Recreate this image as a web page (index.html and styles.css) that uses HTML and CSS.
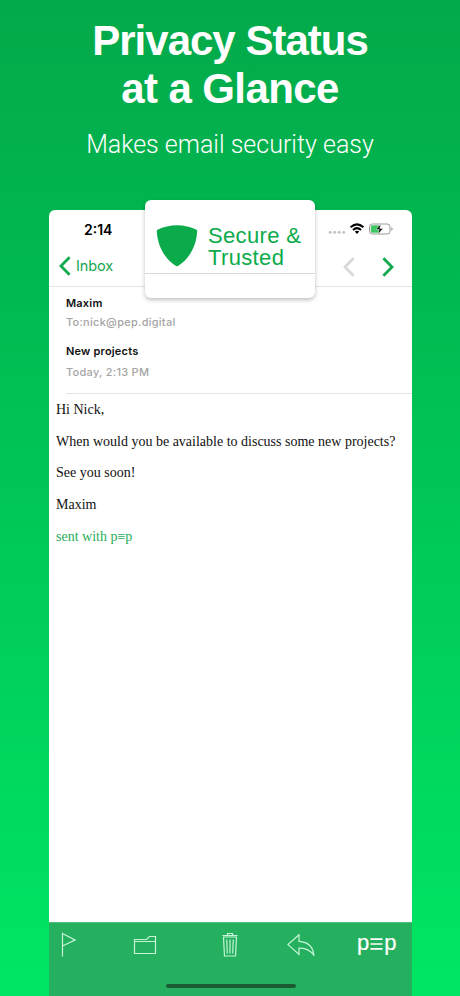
FILE: index.html
```html
<!DOCTYPE html>
<html lang="en">
<head>
    <meta charset="UTF-8">
    <meta name="viewport" content="width=device-width, initial-scale=1.0">
    <title>Privacy Status at a Glance</title>
    <link rel="stylesheet" href="styles.css">
</head>
<body>
    <header class="intro">
        <h1>Privacy Status<br><span class="second-line">at a Glance</span></h1>
        <p>Makes email security easy</p>
    </header>

    <main class="phone">
        <div class="status-bar">
            <span class="time">2:14</span>
            <svg class="status-icons" width="66" height="16" viewBox="0 0 66 16">
                <g fill="#c4c4c4">
                    <circle cx="2.2" cy="11.2" r="1.5"/>
                    <circle cx="6.7" cy="11.2" r="1.5"/>
                    <circle cx="11.2" cy="11.2" r="1.5"/>
                    <circle cx="15.7" cy="11.2" r="1.5"/>
                </g>
                <g fill="none" stroke="#000" stroke-width="2">
                    <path d="M22.6 6.2Q29 .5 35.4 6.2"/>
                    <path d="M25 8.9Q29 5.3 33 8.9"/>
                </g>
                <path d="M26.8 10.6Q29 8.9 31.2 10.6L29 13z"/>
                <rect x="41.500" y="3" width="20.500" height="10" rx="2.8" fill="#fff" stroke="#999" stroke-width="1"/>
                <rect x="42.800" y="4.300" width="9" height="7.400" rx="1.5" fill="#3fc765"/>
                <path d="M63.300 6.200v3.500q1.400-.5 1.400-1.750T63.300 6.200z" fill="#999"/>
                <path d="M53 2.8l-5 5.800h3.200l-1.200 4.800 5-6h-3.200z" stroke="#fff" stroke-width=".5"/>
            </svg>
        </div>

        <nav class="nav-bar">
            <a class="back" href="#">
                <svg width="12" height="20" viewBox="0 0 12 20"><path d="M10.6 1.3L2 10l8.6 8.7"/></svg>
                <span>Inbox</span>
            </a>
            <div class="arrows">
                <svg class="previous" width="12" height="20" viewBox="0 0 12 20"><path d="M10.6 1.3L2 10l8.6 8.7"/></svg>
                <svg class="next" width="12" height="20" viewBox="0 0 12 20"><path d="M1.4 1.3L10 10l-8.6 8.7"/></svg>
            </div>
        </nav>

        <section class="mail-head">
            <div class="sender">Maxim</div>
            <div class="recipient">To:nick@pep.digital</div>
            <div class="subject">New projects</div>
            <div class="date">Today, 2:13 PM</div>
        </section>

        <article class="mail-body">
            <p>Hi Nick,</p>
            <p>When would you be available to discuss some new projects?</p>
            <p>See you soon!</p>
            <p>Maxim</p>
            <p class="signature">sent with p≡p</p>
        </article>

        <footer class="toolbar">
            <div class="actions">
                <svg class="flag" width="15" height="25" viewBox="0 0 15 25"><path d="M1.5 24.5V1.5L14 8 1.5 14"/></svg>
                <svg class="folder" width="24" height="20" viewBox="0 0 24 20"><path d="M1.5 18.5v-14h12l3-3h6v17zM1.5 6.500h21"/></svg>
                <svg class="trash" width="16" height="25" viewBox="0 0 16 25"><path d="M.5 3.5h15M5.5 3.5v-2h5v2M1.500 5h13l-1 19h-11zM4.700 7.500l.6 14M8 7.500v14M11.300 7.500l-.6 14"/></svg>
                <svg class="reply" width="28" height="22" viewBox="0 0 28 22"><path d="M12 .8L1 10.6 12 20.5v-6.400q9-.6 14.800 7Q26 8.500 12 7.300z"/></svg>
                <span class="pep">p<svg width="13" height="12" viewBox="0 0 13 12"><path d="M.5 1.200h12M.5 6h12M.5 10.800h12"/></svg>p</span>
            </div>
            <div class="home-indicator"></div>
        </footer>

        <!-- privacy status callout -->
        <div class="badge">
            <div class="badge-content">
                <svg class="shield" width="42" height="42" viewBox="0 0 42 42"><path d="M21 .3Q31.500.3 40.500 4.800Q41.400 5.300 41.200 7C40 22 33 34 22 41Q21 41.600 20 41C9 34 2 22 .8 7Q.6 5.300 1.500 4.800Q10.500.3 21 .3z"/></svg>
                <span>Secure &amp;<br>Trusted</span>
            </div>
        </div>
    </main>
</body>
</html>
```

FILE: styles.css
```css
* {
    box-sizing: border-box;
}
body {
    margin: 0;
    height: 996px;
    overflow: hidden;
    display: flex;
    flex-direction: column;
    background: linear-gradient(#04a94a, #00b750 25%, #00e664);
    font-family: Inter, "Liberation Sans", sans-serif;
}
.intro {
    height: 210px;
    padding-top: 17px;
    color: white;
    text-align: center;
    font-family: "Liberation Sans", Arial, sans-serif;
}
h1 {
    margin: 0;
    font-size: 42px;
    line-height: 48px;
    letter-spacing: -1px;
}
.second-line {
    letter-spacing: -0.6px;
}
.intro p {
    margin: 17px 0 0;
    font-family: Roboto, sans-serif;
    font-weight: 300;
    font-size: 25px;
    line-height: 30px;
}
.phone {
    position: relative;
    width: 363px;
    height: 786px;
    margin-left: 49px;
    display: flex;
    flex-direction: column;
    background: white;
    border-radius: 6px 6px 0 0;
}
.status-bar {
    height: 38px;
    padding: 0 18px 0 35px;
    display: flex;
    justify-content: space-between;
    align-items: center;
}
.time {
    font-size: 14px;
    font-weight: 600;
}
.nav-bar {
    height: 39px;
    padding: 0 18px 3px 10px;
    display: flex;
    justify-content: space-between;
    align-items: center;
    border-bottom: 1px solid #e4e4e4;
}
.nav-bar svg {
    fill: none;
    stroke: #12a84d;
    stroke-width: 2.8;
}
.back {
    display: flex;
    align-items: center;
    gap: 5px;
    color: #12a84d;
    font-size: 14.5px;
    letter-spacing: -0.1px;
    text-decoration: none;
}
.arrows {
    display: flex;
    gap: 27px;
    padding-top: 2px;
}
.nav-bar .previous {
    stroke: #d9d9d9;
}
.mail-head {
    height: 107px;
    margin-left: 17px;
    padding-top: 8px;
    border-bottom: 1px solid #e4e4e4;
    font-size: 11px;
    line-height: 16px;
    letter-spacing: 0.27px;
    color: #a5a5a5;
    font-weight: 500;
}
.sender, .subject {
    color: #111;
    font-weight: 600;
}
.sender, .subject {
    letter-spacing: 0.2px;
}
.recipient {
    margin-top: 3px;
}
.subject {
    margin-top: 13px;
}
.date {
    margin-top: 5px;
}
.mail-body {
    flex: 1;
    padding: 8px 7px;
    font-family: "Liberation Serif", "Times New Roman", serif;
    font-size: 14px;
    line-height: 16px;
    color: #111;
}
.mail-body p {
    margin: 0 0 15.7px;
    white-space: nowrap;
}
.mail-body .signature {
    color: #29ad5b;
}
.toolbar {
    height: 74px;
    background: #25b060;
    border-top: 1px solid #4abe7b;
}
.actions {
    height: 45px;
    padding: 0 14px 2px 12px;
    display: flex;
    align-items: center;
}
.actions svg {
    flex: none;
    fill: none;
    stroke: #c5f5d6;
    stroke-width: 1.2;
}
.folder {
    margin-left: 57px;
}
.trash {
    margin-left: 65px;
}
.reply {
    margin-left: 49px;
}
.pep {
    display: flex;
    align-items: center;
    gap: 1px;
    margin-left: 42px;
    padding-bottom: 3px;
    color: white;
    font-family: "Liberation Sans", Arial, sans-serif;
    font-size: 22px;
    line-height: 24px;
    -webkit-text-stroke: 0.2px white;
}
.actions .pep svg {
    margin-top: 2px;
    stroke: white;
    stroke-width: 1.7;
}
.home-indicator {
    width: 130px;
    height: 4px;
    margin: 16px auto 0;
    border-radius: 2px;
    background: #1b5b33;
}
.badge {
    position: absolute;
    top: -10px;
    left: 96px;
    width: 170px;
    height: 98px;
    background: white;
    border-radius: 6px;
    box-shadow: 0 2px 4px rgba(0, 0, 0, 0.25);
}
.badge-content {
    height: 74px;
    padding: 25px 0 0 11px;
    display: flex;
    gap: 10px;
    border-bottom: 1px solid #d8d8d8;
    color: #0bab4b;
    font-family: "Liberation Sans", Arial, sans-serif;
    font-size: 22px;
    line-height: 22px;
    letter-spacing: 0.35px;
    white-space: nowrap;
}
.shield {
    flex: none;
    fill: #0bab4b;
}
```
